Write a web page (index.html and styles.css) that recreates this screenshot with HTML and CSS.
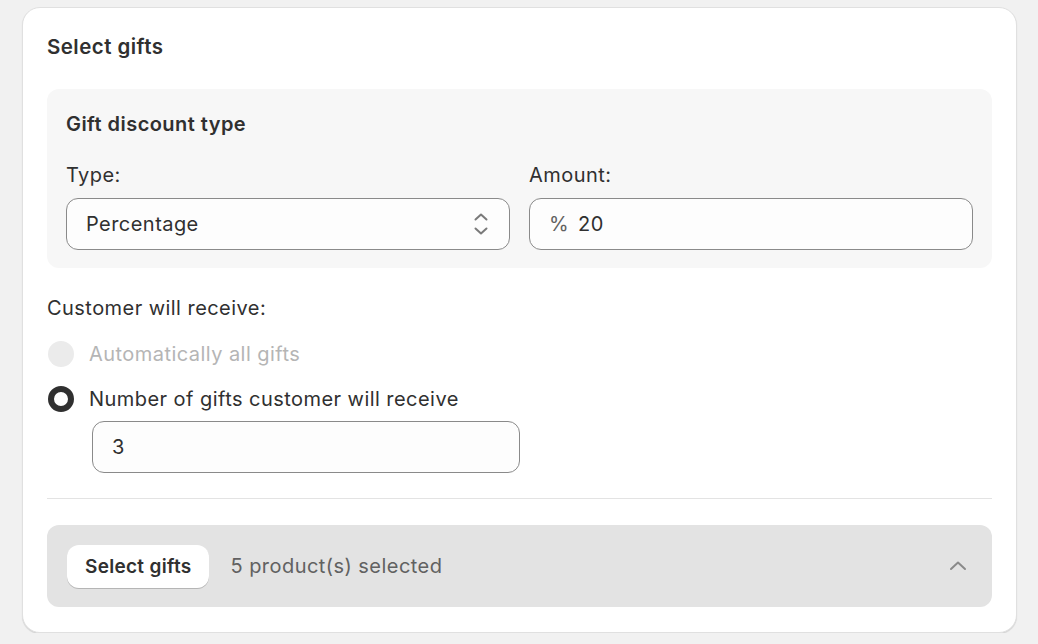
FILE: index.html
```html
<!DOCTYPE html>
<html lang="en">
<head>
    <meta charset="UTF-8">
    <title>Select gifts</title>
    <link rel="stylesheet" href="styles.css">
</head>
<body>
    <div class="card">
        <h2 class="card-title">Select gifts</h2>

        <div class="discount-box">
            <h3 class="box-title">Gift discount type</h3>
            <div class="field-row">
                <div class="field">
                    <label class="label">Type:</label>
                    <div class="input select">
                        <span>Percentage</span>
                        <svg class="select-arrows" width="18" height="26" viewBox="0 0 18 26">
                            <path d="M3.5 8.5 9 3.5 14.5 8.5" fill="none" stroke="#7a7a7a" stroke-width="2" stroke-linecap="round" stroke-linejoin="round"/>
                            <path d="M3.5 17.5 9 22.5 14.5 17.5" fill="none" stroke="#7a7a7a" stroke-width="2" stroke-linecap="round" stroke-linejoin="round"/>
                        </svg>
                    </div>
                </div>
                <div class="field">
                    <label class="label">Amount:</label>
                    <div class="input">
                        <span class="prefix">%</span>
                        <span>20</span>
                    </div>
                </div>
            </div>
        </div>

        <div class="receive">
            <div class="label">Customer will receive:</div>
            <div class="radio-row disabled">
                <span class="radio"></span>
                <span>Automatically all gifts</span>
            </div>
            <div class="radio-row">
                <span class="radio checked"></span>
                <span>Number of gifts customer will receive</span>
            </div>
            <div class="input count-input">3</div>
        </div>

        <hr class="divider">

        <div class="gifts-bar">
            <button class="btn">Select gifts</button>
            <span class="selected-text">5 product(s) selected</span>
            <svg class="chevron" width="24" height="24" viewBox="0 0 24 24">
                <path d="M5 15 12 8.5 19 15" fill="none" stroke="#8a8a8a" stroke-width="2" stroke-linecap="round" stroke-linejoin="round"/>
            </svg>
        </div>
    </div>
</body>
</html>
```

FILE: styles.css
```css
body {
    margin: 0;
    background-color: #f1f1f1;
    font-family: Inter, "Noto Sans", sans-serif;
    font-size: 20px;
    letter-spacing: 0.45px;
    line-height: 30px;
    color: #303030;
}

.card {
    margin: 7px 21px 0 22px;
    height: 600px;
    background-color: #fff;
    border: 1px solid #e0e0e0;
    border-radius: 18px;
    box-shadow: 0 1px 1px rgba(0, 0, 0, 0.12);
    padding: 24px 24px 0 24px;
}

.card-title {
    margin: 0;
    font-size: 20.5px;
    font-weight: 600;
    line-height: 30px;
}

.discount-box {
    margin-top: 27px;
    background-color: #f7f7f7;
    border-radius: 12px;
    padding: 20px 19px 18px 19px;
}

.box-title {
    margin: 0;
    font-size: 20px;
    font-weight: 600;
    line-height: 30px;
}

.field-row {
    display: flex;
    gap: 19px;
    margin-top: 21px;
}

.field {
    flex: 1;
}

.label {
    display: block;
    line-height: 30px;
}

.input {
    display: flex;
    align-items: center;
    height: 50px;
    margin-top: 8px;
    padding: 0 19px;
    background-color: #fdfdfd;
    border: 1px solid #8a8a8a;
    border-radius: 12px;
}

.select {
    justify-content: space-between;
    padding-right: 19px;
}

.prefix {
    color: #616161;
    margin-right: 9px;
}

.receive {
    margin-top: 25px;
}

.radio-row {
    display: flex;
    align-items: center;
    gap: 15px;
    margin-top: 16px;
}

.radio-row + .radio-row {
    margin-top: 15px;
}

.radio-row.disabled {
    color: #b5b5b5;
}

.radio {
    width: 26px;
    height: 26px;
    border-radius: 50%;
    box-sizing: border-box;
    background-color: #ebebeb;
    margin-left: 1px;
}

.radio.checked {
    background-color: #fff;
    border: 6.5px solid #303030;
}

.count-input {
    width: 388px;
    margin: 7px 0 0 45px;
}

.divider {
    border: none;
    border-top: 1px solid #e3e3e3;
    margin: 25px 0 0 0;
}

.gifts-bar {
    display: flex;
    align-items: center;
    margin-top: 26px;
    height: 82px;
    padding: 0 22px 0 20px;
    background-color: #e3e3e3;
    border-radius: 12px;
}

.btn {
    height: 43px;
    padding: 0 18px;
    font-family: inherit;
    font-size: 19px;
    letter-spacing: 0.3px;
    font-weight: 600;
    color: #303030;
    background-color: #fff;
    border: none;
    border-radius: 12px;
    box-shadow: 0 1px 0 #b5b5b5, 0 0 0 1px #e3e3e3;
}

.selected-text {
    margin-left: 21px;
    color: #616161;
    flex: 1;
}
```
